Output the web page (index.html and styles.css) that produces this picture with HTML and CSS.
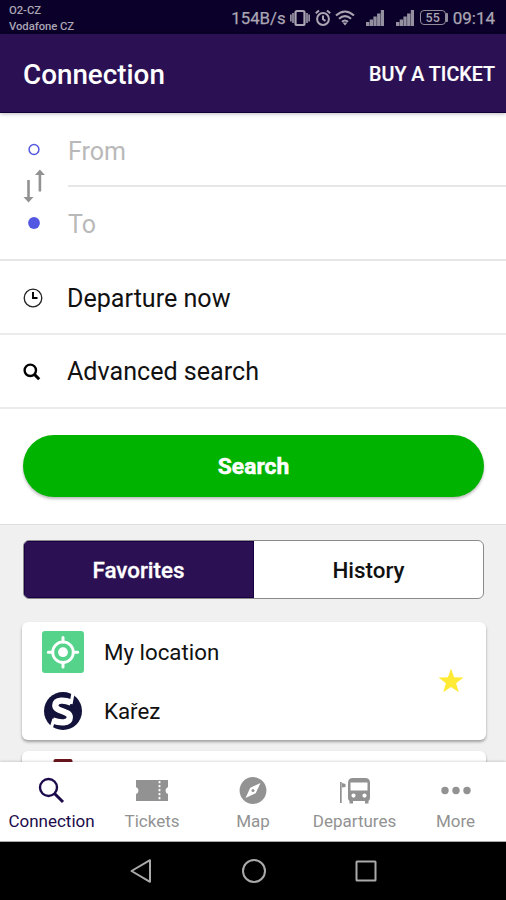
FILE: index.html
```html
<!DOCTYPE html>
<html lang="en">
<head>
<meta charset="utf-8">
<title>Connection</title>
<link rel="stylesheet" href="styles.css">
</head>
<body>
<div class="phone">
  <div class="status">
    <div class="carriers"><span>O2-CZ</span><span>Vodafone CZ</span></div>
    <div class="indicators">
      <span class="rate">154B/s</span>
      <svg class="vibrate" width="20" height="18" viewBox="0 0 20 18" fill="none" stroke="currentColor"><rect x="5.500" y="2" width="9" height="14" rx="1.500" stroke-width="2.200"/><path d="M3 4v10M.9 5.500v7M17 4v10M19.100 5.500v7" stroke-width="1.500"/></svg>
      <svg class="alarm" width="16" height="18" viewBox="0 0 16 18" fill="none" stroke="currentColor" stroke-width="2"><circle cx="8" cy="10" r="5.900"/><path d="M8 6.500v3.800l2.500 1.500M.8 4.300 4 1.500M15.200 4.300 12 1.500"/></svg>
      <svg class="wifi" width="20" height="16" viewBox="0 0 20 16" fill="none" stroke="currentColor" stroke-width="2.100"><path d="M1 5.500Q10-2.500 19 5.500M4 8.800Q10 3.400 16 8.800M7 11.800Q10 9.200 13 11.800"/><path d="m7.500 12.500 2.500 3 2.500-3Z" fill="currentColor" stroke="none"/></svg>
      <svg class="signal" width="18" height="16" viewBox="0 0 18 16" fill="currentColor"><path d="M0 12h3.300v4H0zM3.700 9.500H7V16H3.700zM7.400 6.500h3.300V16H7.400zM11.100 3.500h3.300V16h-3.300zM14.800 0H18v16h-3.200z"/></svg>
      <svg class="signal second" width="18" height="16" viewBox="0 0 18 16" fill="currentColor"><path d="M0 12h3.300v4H0zM3.700 9.500H7V16H3.700zM7.400 6.500h3.300V16H7.400zM11.100 3.500h3.300V16h-3.300zM14.800 0H18v16h-3.200z"/></svg>
      <span class="battery">55</span><i class="nub"></i>
      <span class="time">09:14</span>
    </div>
  </div>

  <header class="header">
    <h1>Connection</h1>
    <span class="buy">BUY A TICKET</span>
  </header>

  <main class="content">
    <section class="form">
      <div class="stations">
        <div class="route">
          <svg width="24" height="88" viewBox="0 0 24 88"><circle cx="12" cy="7.500" r="4.900" fill="none" stroke="#5558e0" stroke-width="1.500"/><g fill="none" stroke="#929292" stroke-width="2.600"><path d="M17.900 49.500V31M6.500 38v20"/></g><path d="m17.900 27.500 5 5.500H13zM6.500 60.500l-5-5.500h10z" fill="#929292"/><circle cx="12" cy="81" r="5.900" fill="#5358e3"/></svg>
        </div>
        <div class="inputs">
          <div class="input from"><span>From</span></div>
          <div class="input to"><span>To</span></div>
        </div>
      </div>
      <div class="option">
        <svg width="20" height="20" viewBox="0 0 20 20" fill="none" stroke="#222"><circle cx="10" cy="10" r="8.800" stroke-width="1.300"/><path d="M10 4v6h4.500" stroke="#000" stroke-width="1.900"/></svg>
        <span class="departure">Departure now</span>
      </div>
      <div class="option last">
        <svg width="20" height="20" viewBox="0 0 20 20" fill="none" stroke="#000"><circle cx="7.300" cy="8.300" r="5.700" stroke-width="2.400"/><path d="m11.400 12.400 4.800 4.800" stroke-width="3"/></svg>
        <span class="advanced">Advanced search</span>
      </div>
      <div class="action"><button class="search">Search</button></div>
    </section>

    <section class="saved">
      <div class="segments">
        <span class="segment active">Favorites</span>
        <span class="segment">History</span>
      </div>
      <article class="card">
        <div class="places">
          <div class="place">
            <svg width="42" height="42" viewBox="0 0 42 42"><rect width="42" height="42" rx="3" fill="#56d38b"/><g fill="none" stroke="#fff"><circle cx="21" cy="21.200" r="10.300" stroke-width="2.800"/><path d="M21 6.500v4.500M21 31.500V36M6.300 21.200h4.500M31.200 21.200h4.500" stroke-width="3" stroke-linecap="round"/></g><circle cx="21" cy="21.200" r="4.900" fill="#fff"/></svg>
            <span class="location">My location</span>
          </div>
          <div class="place">
            <svg class="operator" width="42" height="42" viewBox="0 0 42 42"><circle cx="21" cy="21" r="19" fill="#12123a"/><g fill="none" stroke="#fff"><path d="M29 12.500C23 10 13.500 9 13.300 15.300c-.2 6.500 14.700 5.200 14.500 12-.2 6.500-10 5.700-17 3.200" stroke-width="6.300"/><path d="M29 14 31.300 1.500M12 29 8.500 40" stroke-width="3.200"/></g></svg>
            <span class="karez">Kařez</span>
          </div>
        </div>
        <svg class="star" width="26" height="26" viewBox="0 0 26 26"><path d="m13 .5 3.100 8.800 9.400.1-7.400 5.800 2.700 9-7.800-5.300-7.800 5.300 2.700-9L.5 9.400l9.400-.1Z" fill="#ffeb35"/></svg>
      </article>
      <article class="card next"><svg width="20" height="12" viewBox="0 0 20 12"><rect x=".5" width="19" height="12" rx="2" fill="#6b161c"/></svg></article>
    </section>
  </main>

  <nav class="tabs">
    <div class="tab active"><svg width="28" height="28" viewBox="0 0 28 28" fill="none" stroke="currentColor"><circle cx="10.500" cy="10.500" r="8.500" stroke-width="2.400"/><path d="m16.500 16.500 8.500 8.500" stroke-width="3"/></svg><span>Connection</span></div>
    <div class="tab tickets"><svg width="34" height="28" viewBox="0 0 34 28"><path d="M1 3h32v7q-2.500 1-2.500 3.500T33 17v7H1v-7q2.500-1 2.500-3.500T1 10Z" fill="currentColor"/><path d="M24.500 4v20" stroke="#fff" stroke-width="1.800" stroke-dasharray="2.200 1.800"/></svg><span>Tickets</span></div>
    <div class="tab map"><svg width="28" height="28" viewBox="0 0 28 28"><circle cx="14" cy="13.500" r="13.400" fill="currentColor"/><path d="M21.500 6 16.700 16.200 6.500 21l4.800-10.200Z" fill="#fff"/><circle cx="14" cy="13.500" r="1.500" fill="currentColor"/></svg><span>Map</span></div>
    <div class="tab departures"><svg width="32" height="28" viewBox="0 0 32 28" fill="currentColor"><path d="M1 5h1.700v21H1zM3 6l3.500 1v3L3 10.500z"/><path fill-rule="evenodd" d="M14 1h12q5 0 5 5v15q0 2-1.500 3v2.500H26V24H14v2.500h-3.500V24Q9 23 9 21V6q0-5 5-5Zm-2.500 4.500v8h17v-8Zm3 11a2.100 2.100 0 1 0 0 4.200 2.100 2.100 0 0 0 0-4.200Zm11 0a2.100 2.100 0 1 0 0 4.200 2.100 2.100 0 0 0 0-4.200Z"/></svg><span>Departures</span></div>
    <div class="tab more"><svg width="30" height="28" viewBox="0 0 30 28" fill="currentColor"><circle cx="4" cy="13.500" r="3.700"/><circle cx="15" cy="13.500" r="3.700"/><circle cx="26" cy="13.500" r="3.700"/></svg><span>More</span></div>
  </nav>

  <div class="system">
    <svg width="26" height="26" viewBox="0 0 26 26"><path d="M22 2.200v21.600L3.500 13Z"/></svg>
    <svg width="26" height="26" viewBox="0 0 26 26"><circle cx="13" cy="13" r="11"/></svg>
    <svg width="26" height="26" viewBox="0 0 26 26"><rect x="3.500" y="3.500" width="19" height="19" rx=".5"/></svg>
  </div>
</div>
</body>
</html>
```
FILE: styles.css
```css
* { box-sizing: border-box; }
body { margin: 0; font-family: Roboto, "Liberation Sans", sans-serif; color: #111; background: #fff; }
svg { display: block; flex: none; }
span { white-space: nowrap; }
.phone { width: 506px; height: 900px; display: flex; flex-direction: column; overflow: hidden; }

.status { height: 34px; flex: none; display: flex; justify-content: space-between; background: #0b0029; color: #aaa6b4; }
.carriers { display: flex; flex-direction: column; padding: 3px 0 0 9px; font-size: 11.300px; line-height: 15.500px; font-weight: 500; letter-spacing: -.05px; }
.indicators { display: flex; align-items: center; padding: 1px 11px 0 0; }
.rate, .time { font-size: 17px; line-height: 30px; -webkit-text-stroke: .25px currentColor; }
.rate { margin-right: 4px; font-size: 16.800px; }
.vibrate { margin-right: 5px; }
.alarm { margin-right: 4px; }
.wifi { margin-right: 11px; }
.signal { margin-right: 12px; color: #9490a0; }
.signal.second { margin-right: 6px; }
.battery { width: 26px; height: 15px; border: 1.500px solid #918d9c; border-radius: 4px; font-size: 12.500px; font-weight: 500; line-height: 13px; text-align: center; }
.nub { width: 2px; height: 9px; background: #918d9c; margin-right: 5px; border-radius: 0 1px 1px 0; }

.header { height: 79px; flex: none; display: flex; align-items: center; justify-content: space-between; padding: 3px 11px 0 23px; background: #2b1154; border-bottom: 1px solid #110036; color: #fff; position: relative; box-shadow: 0 1px 4px #0004; }
h1 { margin: 0; font-size: 27.800px; font-weight: 500; }
.buy { font-size: 19.700px; font-weight: 500; -webkit-text-stroke: .2px currentColor; }

.content { flex: 1; min-height: 0; overflow: hidden; background: #f0f0f0; }
.form { height: 412px; background: #fff; border-bottom: 1px solid #dedede; }
.stations { height: 148px; display: flex; border-bottom: 2px solid #e7e7e7; }
.route { width: 68px; padding: 29px 0 0 22px; }
.inputs { flex: 1; }
.input { height: 74px; display: flex; align-items: center; color: #b9b9b9; font-size: 25px; }
.from { border-bottom: 2px solid #e7e7e7; padding-top: 4px; }
.option { height: 74px; display: flex; align-items: center; padding: 2px 0 0 23px; border-bottom: 2px solid #ebebeb; font-size: 25.100px; }
.option.last { padding-top: 1px; }
.option span { margin-left: 24px; }
.action { padding: 26px 22px 0 23px; }
.search { display: block; width: 100%; height: 62px; border: 0; border-radius: 31px; background: #00b300; color: #fff; font: 700 22.800px Roboto, sans-serif; -webkit-text-stroke: .5px #fff; padding: 1px 0 0; box-shadow: 0 2px 3px #0004; }

.saved { padding: 15px 20px 0 22px; }
.segments { height: 59px; margin: 0 2px 0 1px; border: 1px solid #8a8a8a; border-radius: 6px; background: #fff; display: flex; overflow: hidden; }
.segment { flex: 1; display: flex; align-items: center; justify-content: center; font-size: 22.400px; font-weight: 500; }
.segment.active { background: #2b1154; color: #fff; box-shadow: inset 0 0 0 1px #190044; -webkit-text-stroke: .3px #fff; padding-right: 1px; }
.card { margin-top: 23px; height: 118px; border-radius: 6px; background: #fff; box-shadow: 0 2px 3px #0005; display: flex; align-items: center; justify-content: space-between; padding: 0 22px 0 20px; }
.places { display: flex; flex-direction: column; gap: 17px; }
.place { height: 40px; display: flex; align-items: center; gap: 20px; font-size: 22.300px; }
.places { gap: 19px; }
.card.next { margin-top: 11px; align-items: flex-start; padding: 8px 31px; }

.tabs { height: 80px; flex: none; display: grid; grid-template-columns: repeat(5, 1fr); padding-left: 1px; background: #fff; position: relative; box-shadow: 0 -1px 2px #0002; border-bottom: 1px solid #aaa; }
.tab { display: flex; flex-direction: column; align-items: center; color: #929292; padding-top: 15px; font-size: 17px; }
.tab.active { color: #1c0b4b; }
.tab.tickets, .tab.map { padding-right: 1px; }
.tab span { margin-top: 6px; line-height: 20px; }
.system { height: 58px; flex: none; background: #000; display: flex; align-items: center; justify-content: center; gap: 86.500px; padding-left: 1px; }
.system svg { fill: none; stroke: #aaa; stroke-width: 2; stroke-linejoin: round; }
```
